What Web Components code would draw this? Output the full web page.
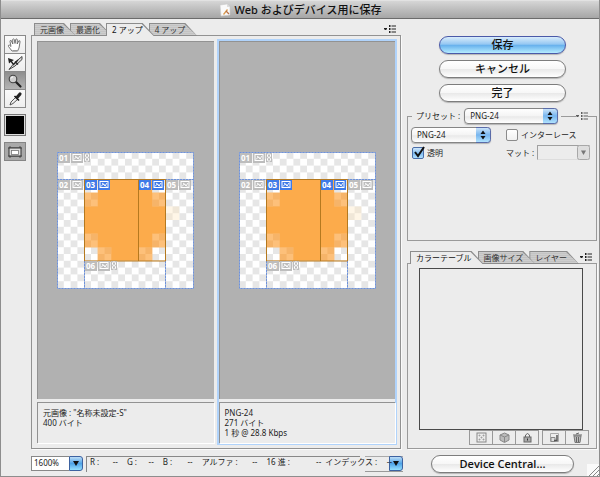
<!DOCTYPE html>
<html lang="ja">
<head>
<meta charset="utf-8">
<title>Web およびデバイス用に保存</title>
<style>
html, body { margin: 0; height: 100%; }
body { font: 8px/10px "Noto Sans", "Noto Sans CJK JP", sans-serif; color: #1c1c1c; background: #ececec; }
</style>
</head>
<body>
<save-dialog></save-dialog>
<script>
const define = (name, html, setup) => customElements.define(name, class extends HTMLElement {
  connectedCallback() {
    if (this.shadowRoot) return;
    const root = this.attachShadow({ mode: "open" });
    const t = document.createElement("template");
    t.innerHTML = "<style>*{box-sizing:border-box}button,input,select{font:inherit;color:inherit;margin:0}:host([hidden]){display:none}</style>" + html;
    root.append(t.content.cloneNode(true));
    if (setup) setup(root, this);
  }
});

define("title-bar", `
<style>
:host { display: flex; align-items: center; justify-content: center; gap: 4px; height: 19px; box-sizing: border-box;
  background: linear-gradient(#d6d6d6, #c2c2c2 40%, #a6a6a6); border-bottom: 1px solid #6c6c6c; border-top: 1px solid #e2e2e2; }
h1 { margin: 0; font-size: 11px; line-height: 16px; font-weight: 500; color: #111; }
svg { width: 12px; height: 14px; }
</style>
<svg viewBox="0 0 12 14"><path d="M1 2l7-1 3 3v8l-9 1z" fill="#fafafa" stroke="#c9c9c9" stroke-width=".6"/><path d="M8 1v3h3z" fill="#ddd"/><path d="M4 11l4-5 1 1-4 5z" fill="#d99a4e"/><path d="M7 8l3 3" stroke="#b5714a" stroke-width="1.2"/></svg>
<h1><slot></slot></h1>`);

define("tool-palette", `
<style>
:host { display: flex; flex-direction: column; gap: 6px; }
.tools { border: 1px solid #8a8a8a; display: flex; flex-direction: column; background: #8a8a8a; gap: 1px; }
button { padding: 0; border: 0; height: 17px; background: linear-gradient(#fafafa, #eee); display: grid; place-items: center; }
button[aria-pressed=true] { background: linear-gradient(#8e8e8e, #b4b4b4); }
svg { width: 18px; height: 16px; display: block; }
.swatch { height: 22px; background: #000; border: 1px solid #777; box-shadow: inset 0 0 0 1px #ddd; }
.view { height: 19px; border: 1px solid #858585; background: #a9a9a9; }
</style>
<div class="tools">
<button aria-label="手のひら" aria-pressed="false"><svg viewBox="0 0 18 16"><path d="M6 14L2.5 9.5Q2 8 3.3 8L5 9.5 4 4.5Q4 3 5.2 3.5L6.8 7 6.7 2.5Q7.2 1.2 8.2 2.3L9 6.5 9.8 2.2Q11 1.2 11.3 2.8L11.2 7 12.8 3.8Q14.3 3.2 14 5L13 11 11.6 14Z" fill="#fff" stroke="#666" stroke-width=".9"/><path d="M7 13.5h5" stroke="#999"/></svg></button>
<button aria-label="スライス選択" aria-pressed="false"><svg viewBox="0 0 18 16"><path d="M2 3l6 2-2 1.200L8 9 6.500 9.500 4.800 7 3 8.500Z" fill="#222"/><path d="M16 1.500L16 4.500 9 11 3 14.500 7 9.500 13 4Z" fill="#ddd" stroke="#333" stroke-width=".9"/><path d="M9 6.500l3 3M12 5l-5 5" stroke="#222" stroke-width="1.300"/></svg></button>
<button aria-label="ズーム" aria-pressed="true"><svg viewBox="0 0 18 16"><path d="M9.500 8.500l5 5" stroke="#222" stroke-width="2.200" stroke-linecap="round"/><circle cx="7" cy="6" r="3.800" fill="#cfcfcf" stroke="#444" stroke-width="1.100"/><path d="M5 5.500Q5.500 4 7 3.800" stroke="#fff" fill="none"/></svg></button>
<button aria-label="スポイト" aria-pressed="false"><svg viewBox="0 0 18 16"><path d="M10 6L5 11 4 14 7 12.500 12 8Z" fill="#eee" stroke="#444" stroke-width=".9"/><path d="M8.500 5l4.500 4.500" stroke="#111" stroke-width="1.600"/><path d="M11 6.500L14 3" stroke="#222" stroke-width="3.200" stroke-linecap="round"/></svg></button>
</div>
<button class="swatch" aria-label="スポイトカラー"></button>
<button class="view" aria-label="スライスの表示"><svg viewBox="0 0 18 16"><path d="M2 4h14M2 12h14M4 2v12M14 2v12" stroke="#555"/><rect x="3" y="4" width="12" height="8" fill="#ddd" stroke="#333"/><rect x="5.500" y="6.500" width="7" height="4" fill="#fff" stroke="#777" stroke-width=".8"/></svg></button>`);

define("menu-glyph", `
<style>
:host { display: block; }
button { display: block; border: 0; padding: 0; background: none; }
svg { display: block; width: 12px; height: 8px; fill: #222; }
</style>
<button aria-label="パネルメニュー"><svg viewBox="0 0 12 8"><path d="M0 3h3v1.500H2V5H1v-.5H0zM5 0h1.500v2H5zM5 3h1.500v2H5zM5 6h1.500v2H5zM7.500.5H12v1H7.500zM7.500 3.500H12v1H7.500zM7.500 6.500H12v1H7.500z"/></svg></button>`);

define("tab-strip", `
<style>
:host { display: flex; align-items: flex-end; padding: 0 5px 0 3px; margin-bottom: -1px; position: relative; }
.tabs { display: flex; flex: 1; }
button { position: relative; border: 0; background: none; height: 13px; line-height: 12px; padding: 0 12px 0 6px; margin-right: -6px; white-space: nowrap; color: #333; isolation: isolate; }
button::before, button::after { content: ""; position: absolute; z-index: -1; clip-path: polygon(0 0, calc(100% - 12px) 0, 100% 100%, 0 100%); }
button::before { inset: 0; background: #8c8c8c; }
button::after { inset: 1px; background: repeating-linear-gradient(#cdcdcd 0 1px, #c3c3c3 1px 2px); }
button[aria-selected=true] { z-index: 9; color: #111; }
button[aria-selected=true]::after { background: #ececec; bottom: 0; }
menu-glyph { margin-bottom: 3px; }
</style>
<div class="tabs" role="tablist"></div><menu-glyph></menu-glyph>`, (root, host) => {
  const list = root.querySelector(".tabs");
  host.getAttribute("tabs").split("|").forEach((label, i) => {
    const b = document.createElement("button");
    b.role = "tab";
    b.textContent = label;
    b.style.zIndex = String(i) === host.getAttribute("selected") ? 9 : 8 - i;
    b.setAttribute("aria-selected", String(i) === host.getAttribute("selected"));
    list.append(b);
  });
});

define("slice-art", `
<style>
:host { display: block; width: 137px; }
svg { display: block; width: 100%; }
text { font: bold 8px "Noto Sans", sans-serif; fill: #fff; }
</style>
<svg viewBox="0 0 137 137">
<defs>
<pattern id="check" width="13.6" height="13.6" patternUnits="userSpaceOnUse"><path d="M0 0h13.600v13.600H0z" fill="#fff"/><path d="M6.800 0h6.800v6.800H6.800zM0 6.800h6.800v6.800H0z" fill="#e6e6e6"/></pattern>
<pattern id="tint" width="13.6" height="13.6" patternUnits="userSpaceOnUse"><path d="M0 0h13.600v13.600H0z" fill="#fdc07a"/><path d="M6.800 0h6.800v6.800H6.800zM0 6.800h6.800v6.800H0z" fill="#f6b469"/></pattern>
<g id="mark"><rect x="1" y="1.500" width="8" height="6" fill="none" stroke="#fff"/><path d="M2 6.500l2.200-2.500 1.800 1.800L8 3M3 3l4.500 3.500" stroke="#fff" stroke-width=".9" fill="none"/></g>
<g id="link"><rect width="6" height="9" fill="#bdbdbd"/><rect x="1.500" y="1" width="3" height="3.200" rx="1" fill="none" stroke="#fff"/><rect x="1.500" y="4.800" width="3" height="3.200" rx="1" fill="none" stroke="#fff"/></g>
</defs>
<path d="M0 0h136v136H0z" fill="url(#check)"/>
<path d="M108.800 54.400h13.600V68h-13.600z" fill="#ffe9c4" opacity=".4"/>
<path d="M27.200 27.200h81.600v81.600H27.200z" fill="#fcab4b"/>
<path d="M27.200 27.200h13.600v13.600H27.200zM95.200 27.200h13.600v13.600H95.200zM27.200 95.200h13.600v13.600H27.200zM95.200 95.200h13.600v13.600H95.200z" fill="url(#check)"/>
<path d="M27.200 40.800h13.600v13.600H27.200zM95.200 40.800h13.600v13.600H95.200zM27.200 81.600h13.600v13.600H27.200zM95.200 81.600h13.600v13.600H95.200zM40.800 95.200h13.600v13.600H40.800zM81.600 95.200h13.600v13.600H81.600z" fill="url(#tint)"/>
<path d="M.5.5h136v136H.5zM0 27.500h137M27.500 109v28M108.500 109v28" fill="none" stroke="#a9b6cf"/>
<path d="M.5.5h136v136H.5zM0 27.500h137M27.500 109v28M108.500 109v28" fill="none" stroke="#6d92dc" stroke-dasharray="2 1"/>
<path d="M27.500 27.500h81v81.500h-81zM81.500 27.500V109" fill="none" stroke="#b5791f"/>
<g class="labels"></g>
</svg>`, root => {
  const slices = [["01", 1, 1, 0, 1], ["02", 1, 28, 0, 0], ["03", 28, 28, 1, 0], ["04", 82, 28, 1, 0], ["05", 109, 28, 0, 0], ["06", 28, 109, 0, 1]];
  root.querySelector(".labels").innerHTML = slices.map(([n, x, y, on, link]) => {
    const c = on ? "#3f7be8" : "#bdbdbd";
    return `<g transform="translate(${x} ${y})"><rect width="12" height="10" fill="${c}"/><text x="1" y="8">${n}</text>
      <g transform="translate(13 0)"><rect width="12" height="10" fill="${c}"/><use href="#mark" x="1"/></g>${link ? '<use href="#link" x="26"/>' : ""}</g>`;
  }).join("");
});

define("preview-pane", `
<style>
:host { display: flex; flex-direction: column; gap: 3px; flex: 1; border: 2px solid transparent; min-width: 0; }
:host([active]) { border-color: #b0d3fb; }
.canvas { flex: 1; background: #b1b1b1; border: 1px solid #929292; border-width: 1px 0 0 1px; display: grid; place-items: center; }
.info { height: 41px; border: 1px solid #929292; border-width: 1px 0 0 1px; padding: 5px; white-space: pre-line; box-shadow: 1px 1px #fff; font-size: 8px; }
</style>
<div class="canvas"><slice-art></slice-art></div>
<div class="info"><slot></slot></div>`);

define("pill-button", `
<style>
:host { display: block; }
button { display: block; width: 100%; height: 18px; padding: 0; border: 1px solid #7d7d7d; border-radius: 9px; font-size: 11px; line-height: 16px; font-weight: 500; color: #111;
  background: linear-gradient(#fff, #f7f7f7 48%, #e9e9e9 52%, #fff); box-shadow: 0 1px 1px #b5b5b5; }
:host([primary]) button { border-color: #4a59a8; background: linear-gradient(#d9ecfb, #94c7f2 45%, #67b1ed 52%, #b5ecff); }
:host([latin]) button { font-family: "Open Sans", sans-serif; font-weight: 600; }
</style>
<button><slot></slot></button>`);

define("pop-up", `
<style>
:host { display: flex; align-items: center; gap: 4px; white-space: nowrap; }
.box { position: relative; flex: 1; display: block; }
select { appearance: none; display: block; width: 100%; height: 16px; padding: 0 18px 0 5px; border: 1px solid #858585; border-radius: 4px; line-height: 14px;
  background: linear-gradient(#fff, #f4f4f4 50%, #e9e9e9 55%, #fff); box-shadow: 0 1px 1px #b5b5b5; }
svg { position: absolute; right: 0; top: 0; width: 15px; height: 16px; pointer-events: none; }
</style>
<label for="s"></label>
<span class="box"><select id="s"></select>
<svg viewBox="0 0 15 16"><defs><linearGradient id="g" x2="0" y2="1"><stop stop-color="#cfe6fa"/><stop offset=".5" stop-color="#77b5ee"/><stop offset="1" stop-color="#b4e6ff"/></linearGradient></defs><path d="M0 .5h11.500q3 0 3 3v9q0 3-3 3H0z" fill="url(#g)"/><path d="M0 .5h11.500q3 0 3 3v9q0 3-3 3H0" fill="none" stroke="#5a6ba8"/><path d="M7 3.500l2.500 3.500h-5zM7 12.500L4.500 9h5z" fill="#111"/></svg></span>`, (root, host) => {
  const label = root.querySelector("label"), select = root.querySelector("select");
  if (host.hasAttribute("label")) label.textContent = host.getAttribute("label"); else { label.remove(); select.ariaLabel = host.getAttribute("name"); }
  select.add(new Option(host.getAttribute("value")));
});

define("check-box", `
<style>
:host { display: block; }
label { display: flex; align-items: center; gap: 3px; white-space: nowrap; }
span { position: relative; display: block; }
input { appearance: none; display: block; width: 12px; height: 12px; border: 1px solid #8b8b8b; border-radius: 2px; background: linear-gradient(#fff, #f1f1f1); }
input:checked { border-color: #4a6ea8; background: linear-gradient(#cfe6fb, #7fbcf2 55%, #b0e0ff); }
svg { position: absolute; left: 1px; bottom: 1px; width: 12px; height: 12px; visibility: hidden; pointer-events: none; }
input:checked + svg { visibility: visible; }
</style>
<label><span><input type="checkbox"><svg viewBox="0 0 12 12"><path d="M2 6l3 4 6-9" fill="none" stroke="#111" stroke-width="2"/></svg></span><slot></slot></label>`,
  (root, host) => { root.querySelector("input").checked = host.hasAttribute("checked"); });

define("matte-field", `
<style>
:host { display: flex; align-items: center; gap: 3px; white-space: nowrap; }
.box { position: relative; flex: 1; }
select { appearance: none; display: block; width: 100%; height: 15px; border: 1px solid #a0a0a0; border-right-color: #ddd; border-bottom-color: #ddd; background: #ececec; opacity: 1; }
svg { position: absolute; right: 0; top: 0; width: 13px; height: 15px; }
</style>
<label for="m">マット :</label><span class="box"><select id="m" disabled></select>
<svg viewBox="0 0 13 15"><rect x=".5" y=".5" width="12" height="14" rx="2" fill="#dedede" stroke="#a8a8a8"/><path d="M4 5.500h5L6.500 10z" fill="#777"/></svg></span>`);

define("preset-group", `
<style>
:host { display: flex; flex-direction: column; }
fieldset { flex: 1; margin: 0; padding: 3px 6px 0 3px; border: 1px solid #9a9a9a; min-width: 0; }
legend { box-sizing: content-box; width: calc(100% + 9px); margin: 0 -6px 0 -3px; padding: 0; display: flex; align-items: center; background: #ececec; }
i { height: 1px; background: #9a9a9a; }
.a { width: 4px; } .b { flex: 1; margin-left: 3px; } .c { width: 8px; }
.preset { width: 142px; margin-left: 4px; }
menu-glyph { opacity: .7; }
.rows { display: grid; grid-template-columns: 80px 84px; justify-content: space-between; align-items: center; row-gap: 2px; }
check-box.t { padding-left: 1px; }
</style>
<fieldset><legend><i class="a"></i><pop-up class="preset" label="プリセット :" value="PNG-24"></pop-up><i class="b"></i><menu-glyph></menu-glyph><i class="c"></i></legend>
<div class="rows"><pop-up name="ファイル形式" value="PNG-24"></pop-up><check-box>インターレース</check-box>
<check-box class="t" checked>透明</check-box><matte-field></matte-field></div></fieldset>`);

define("table-actions", `
<style>
:host { display: flex; justify-content: flex-end; gap: 3px; }
div { display: flex; border: 1px solid #999; }
button { width: 22px; height: 13px; padding: 0; border: 0; background: #ececec; display: grid; place-items: center; }
button + button { width: 23px; border-left: 1px solid #999; }
svg { width: 11px; height: 11px; fill: none; stroke: #888; }
</style>
<div><button aria-label="透明にマップ"><svg viewBox="0 0 11 11"><rect x="1" y="1" width="9" height="9"/><path d="M3 3h1v1H3zM7 3h1v1H7zM5 5h1v1H5zM3 7h1v1H3zM7 7h1v1H7z" stroke-width=".6"/></svg></button>
<button aria-label="Web セーフ"><svg viewBox="0 0 11 11"><path d="M5.500 1L10 3v5l-4.500 2.500L1 8V3z" fill="#bbb"/><path d="M1 3l4.500 2v5M5.500 5L10 3"/></svg></button>
<button aria-label="ロック"><svg viewBox="0 0 11 11"><path d="M3.500 5V3q2-3 4 0v2" stroke="#666"/><rect x="2" y="5" width="7" height="5" fill="#aaa" stroke="#666"/><path d="M5.500 6.500v2" stroke="#333"/></svg></button></div>
<div><button aria-label="新規カラー"><svg viewBox="0 0 11 11"><path d="M1.500 1.500h8v8h-8z" stroke="#aaa"/><path d="M2 5.500h4v4H2z" fill="#ddd"/><path d="M8 3v5.500H5" stroke="#555" stroke-width="1.500"/></svg></button>
<button aria-label="削除"><svg viewBox="0 0 11 11"><path d="M2 4l1 6.500h5L9 4z" fill="#bbb" stroke="#777"/><path d="M1 3h9M4 2l3-1M4.500 5v5M6.500 5v5" stroke="#666"/></svg></button></div>`);

define("color-panel", `
<style>
:host { display: flex; flex-direction: column; }
.panel { flex: 1; border: 1px solid #9a9a9a; padding: 4px 7px 3px 11px; display: flex; flex-direction: column; box-shadow: 1px 1px #fafafa; }
.table { flex: 1; margin-right: 6px; border: 1px solid #4a4a4a; }
</style>
<tab-strip tabs="カラーテーブル|画像サイズ|レイヤー" selected="0"></tab-strip>
<div class="panel"><div class="table"></div><table-actions></table-actions></div>`);

define("zoom-combo", `
<style>
:host { display: flex; width: 52px; height: 15px; }
input { flex: 1; min-width: 0; border: 1px solid #888; border-right: 0; background: #fff; padding: 0 2px; border-radius: 0; }
</style>
<input aria-label="ズームレベル" value="1600%"><blue-arrow></blue-arrow>`);

define("blue-arrow", `
<style>
:host { display: block; }
button { display: block; border: 0; padding: 0; background: none; }
svg { display: block; width: 14px; height: 15px; }
</style>
<button aria-label="メニューを開く"><svg viewBox="0 0 14 15"><defs><linearGradient id="g" x2="0" y2="1"><stop stop-color="#c5e1f8"/><stop offset=".5" stop-color="#4fa3e6"/><stop offset="1" stop-color="#9ae4ff"/></linearGradient></defs><path d="M.5.5H11q2.500 0 2.500 2.500v9q0 2.500-2.500 2.500H.5z" fill="url(#g)" stroke="#3d62a0"/><path d="M4 5h6l-3 5z" fill="#111"/></svg></button>`);

define("status-readout", `
<style>
:host { display: grid; height: 15px; }
.wells, dl { grid-area: 1 / 1; }
.wells { display: flex; gap: 5px; }
.well { border: 1px solid #888; border-width: 1px 0 0 1px; flex: 1; }
.index { width: 38px; display: flex; justify-content: flex-end; border-top: 1px solid #aaa; border-bottom: 1px solid #999; }
.index blue-arrow { margin-top: -1px; }
dl { margin: 0; padding: 0 11px 0 4px; display: grid; grid-template-columns: 37fr 36fr 39fr 65fr 59fr 67fr; pointer-events: none; position: relative; white-space: nowrap; line-height: 12px; }
dl div { display: flex; justify-content: space-between; padding-right: 9px; }
dl div:nth-child(5) { padding-right: 4px; } dl div:last-child { padding-right: 0; }
dd { margin: 0; }
</style>
<div class="wells"><div class="well"></div><div class="index"><blue-arrow></blue-arrow></div></div>
<dl>${["R", "G", "B", "アルファ", "16 進", "インデックス"].map(n => `<div><dt>${n} :</dt><dd>--</dd></div>`).join("")}</dl>`);

define("save-dialog", `
<style>
:host { display: flex; flex-direction: column; min-height: 100vh; box-sizing: border-box; background: #ececec; border: 1px solid #8d8d8d; border-top: 0; position: relative; }
.body { flex: 1; display: grid; grid-template-columns: 22px 375fr 196fr; padding: 4px 2px 1px 3px; }
tool-palette { padding-top: 12px; }
.main { display: flex; flex-direction: column; padding-left: 5px; min-width: 0; }
.panel { flex: 1; display: flex; gap: 1px; border: 1px solid #929292; padding: 3px; box-shadow: 1px 1px #fafafa; }
.bottom { display: flex; gap: 3px; margin: 5px 0 3px; height: 18px; align-items: center; margin-right: -2px; }
status-readout { flex: 1; }
.side { display: flex; flex-direction: column; padding-left: 6px; min-width: 0; }
.buttons { display: flex; flex-direction: column; gap: 6px; padding: 13px 31px 6px 32px; }
preset-group { flex: 133; } color-panel { flex: 198; margin-top: 10px; }
.device { margin: 6px 23px 2px 24px; }
.grip { position: absolute; right: 0; bottom: 0; width: 12px; height: 12px; }
</style>
<title-bar>Web およびデバイス用に保存</title-bar>
<div class="body">
<tool-palette></tool-palette>
<section class="main">
<tab-strip tabs="元画像|最適化|2 アップ|4 アップ" selected="2"></tab-strip>
<div class="panel"><preview-pane>元画像 : "名称未設定-S"<br>400 バイト</preview-pane><preview-pane active>PNG-24<br>271 バイト<br>1 秒 @ 28.8 Kbps</preview-pane></div>
<div class="bottom"><zoom-combo></zoom-combo><status-readout></status-readout></div>
</section>
<section class="side">
<div class="buttons"><pill-button primary>保存</pill-button><pill-button>キャンセル</pill-button><pill-button>完了</pill-button></div>
<preset-group></preset-group>
<color-panel></color-panel>
<pill-button class="device" latin>Device Central...</pill-button>
</section>
</div>
<svg class="grip" viewBox="0 0 12 12"><path d="M0 0h12v12H0z" fill="#fafafa"/><path d="M2 12L12 2M6 12l6-6M10 12l2-2" stroke="#888"/></svg>`);
</script>
</body>
</html>
